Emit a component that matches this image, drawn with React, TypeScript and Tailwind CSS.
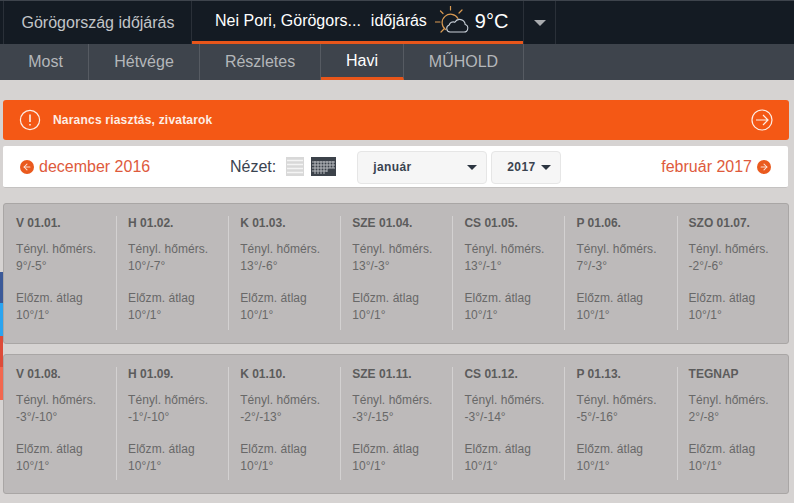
import { ArrowLeft, ArrowRight } from "lucide-react";

const row1 = [
  { day: "V 01.01.", temp: "9°/-5°" },
  { day: "H 01.02.", temp: "10°/-7°" },
  { day: "K 01.03.", temp: "13°/-6°" },
  { day: "SZE 01.04.", temp: "13°/-3°" },
  { day: "CS 01.05.", temp: "13°/-1°" },
  { day: "P 01.06.", temp: "7°/-3°" },
  { day: "SZO 01.07.", temp: "-2°/-6°" },
];

const row2 = [
  { day: "V 01.08.", temp: "-3°/-10°" },
  { day: "H 01.09.", temp: "-1°/-10°" },
  { day: "K 01.10.", temp: "-2°/-13°" },
  { day: "SZE 01.11.", temp: "-3°/-15°" },
  { day: "CS 01.12.", temp: "-3°/-14°" },
  { day: "P 01.13.", temp: "-5°/-16°" },
  { day: "TEGNAP", temp: "2°/-8°" },
];

const tabs = [
  { label: "Most", w: "w-[86px]" },
  { label: "Hétvége", w: "w-[111px]" },
  { label: "Részletes", w: "w-[121px]" },
  { label: "Havi", w: "w-[83px]", active: true },
  { label: "MŰHOLD", w: "w-[120px]" },
];

function WeatherIcon() {
  return (
    <svg width="34" height="30" viewBox="0 0 34 30" fill="none" className="shrink-0">
      <g stroke="#d99a52" strokeWidth="1.2" strokeLinecap="round">
        <path d="M15.5 0v4M5.5 5l2.5 2.5M27 4l-3 3M0.5 16h4.5M6 26l3-3" />
        <path d="M10.5 23.5a8.5 8.5 0 1 1 12.5-11" />
      </g>
      <path
        d="M15 26h14a3.8 3.8 0 0 0 1.2-7.4 5.6 5.6 0 0 0-10.4-2.4 4.2 4.2 0 0 0-5.6 2.8A3.6 3.6 0 0 0 15 26z"
        stroke="#c9d0d8"
        strokeWidth="1.1"
      />
    </svg>
  );
}

function DayCard({ items, height }: { items: typeof row1; height: string }) {
  return (
    <div className={`flex ${height} rounded-[3px] border border-[#a9a6a5] bg-[#bdbaba] pl-px`}>
      {items.map((item, i) => (
        <div key={item.day} className="w-[112.1px] shrink-0 pt-[12px] pb-[13px]">
          <div className={`h-full pl-[11px] ${i < 6 ? "border-r border-[#d3d1d1]" : ""}`}>
            <div className="text-xs leading-[14px] font-bold text-[#5c5c5c]">{item.day}</div>
            <div className="mt-[11px] text-xs leading-[17px] tracking-[0.05px] text-[#686868]">Tényl. hőmérs.</div>
            <div className="text-xs leading-[16px] tracking-[0.05px] text-[#686868]">{item.temp}</div>
            <div className="mt-[16px] text-xs leading-[17px] tracking-[0.05px] text-[#686868]">Előzm. átlag</div>
            <div className="text-xs leading-[16px] tracking-[0.05px] text-[#686868]">10°/1°</div>
          </div>
        </div>
      ))}
    </div>
  );
}

export default function App() {
  return (
    <div className="relative h-[503px] w-[794px] overflow-hidden bg-[#d6d3d2] font-['Liberation_Sans',Arial,sans-serif]">
      {/* Social strip */}
      <div className="absolute left-0 top-[272px] w-[3px]">
        <div className="h-[31px] bg-[#3b5998]" />
        <div className="h-[33px] bg-[#2aa4f0]" />
        <div className="h-[31px] bg-[#dd4b39]" />
        <div className="h-[33px] bg-[#f2674f]" />
      </div>

      {/* Top nav */}
      <div className="h-[44px] border-t border-[#3e444c] bg-[#141b23]">
        <div className="flex h-full pl-[3px]">
          <div className="flex w-[189px] items-center justify-center border-x border-[#2a3038] pl-px text-base text-[#c2c5c8]">
            Görögország időjárás
          </div>
          <div className="flex h-[43px] w-[331px] items-center border-b-[3px] border-[#e8561a] pl-[23px] text-base text-white">
            <span>Nei Pori, Görögors...</span>
            <span className="ml-[10px]">időjárás</span>
            <span className="ml-[8px]">
              <WeatherIcon />
            </span>
            <span className="ml-[6px] text-xl">9°C</span>
          </div>
          <div className="flex w-[33px] items-center justify-center border-x border-[#2a3038]">
            <div className="h-0 w-0 border-x-[6px] border-t-[6px] border-x-transparent border-t-[#a9acaf]" />
          </div>
        </div>
      </div>

      {/* Sub nav */}
      <div className="flex h-[36px] bg-[#3e444c] pl-[3px]">
        {tabs.map((tab) => (
          <div
            key={tab.label}
            className={`flex ${tab.w} items-center justify-center border-r border-[#565b62] text-base ${
              tab.active ? "border-b-[3px] border-b-[#e8561a] text-white" : "text-[#b4b7ba]"
            }`}
          >
            {tab.label}
          </div>
        ))}
      </div>

      {/* Alert */}
      <div className="ml-[3px] mt-[20px] flex h-[40px] w-[786px] items-center justify-between rounded-[3px] bg-[#f45815] pl-[16px] pr-[16px]">
        <div className="flex items-center">
          <svg width="22" height="22" viewBox="0 0 22 22" fill="none" stroke="#fdeee6" strokeWidth="1.2">
            <circle cx="11" cy="11" r="9.6" />
            <path d="M11 5.5v7.5M11 15v1.6" strokeWidth="1.6" />
          </svg>
          <span className="ml-[12px] text-xs font-bold tracking-[0.2px] text-[#fdeee6]">Narancs riasztás, zivatarok</span>
        </div>
        <svg width="22" height="22" viewBox="0 0 22 22" fill="none" stroke="#fdeee6" strokeWidth="1.2">
          <circle cx="11" cy="11" r="10" />
          <path d="M5 11h12M12 6l5 5-5 5" />
        </svg>
      </div>

      {/* Month selector */}
      <div className="ml-[3px] mt-[6px] flex h-[42px] w-[785px] items-center rounded-[2px] border-b border-[#c4c2c1] bg-white pl-[17px]">
        <div className="flex w-[210px] items-center">
          <span className="flex h-[14px] w-[14px] items-center justify-center rounded-full bg-[#ea5a1e]">
            <ArrowLeft size={10} strokeWidth={2.5} className="text-white/80" />
          </span>
          <span className="ml-[5px] text-base text-[#de5a3c]">december 2016</span>
        </div>
        <span className="text-base text-[#3a4350]">Nézet:</span>
        <svg width="18" height="19" viewBox="0 0 18 19" className="ml-[10px] shrink-0">
          <rect width="18" height="19" fill="#d8d8d8" />
          <path d="M1 3.5h16M1 7.5h16M1 11.5h16M1 15.5h16" stroke="#f4f4f4" strokeWidth="1.5" />
        </svg>
        <svg width="25" height="19" viewBox="0 0 25 19" className="ml-[7px] shrink-0">
          <rect width="25" height="19" fill="#3c424a" />
          <path d="M1 5h23M1 8h23M1 11h23M1 14h15M4 4v13M7 4v13M10 4v13M13 4v13M16 4v11M19 4v7M22 4v7" stroke="#b8bbbf" strokeWidth="1" />
        </svg>
        <div className="ml-[21px] mt-px flex h-[33px] w-[130px] items-center justify-between rounded-[4px] border border-[#e6e6e6] bg-[#f6f6f6] pl-[15px] pr-[9px] text-xs font-bold tracking-[0.4px] text-[#3a4350]">
          <span>január</span>
          <div className="h-0 w-0 border-x-[5px] border-t-[5px] border-x-transparent border-t-[#2c3541]" />
        </div>
        <div className="ml-[4px] mt-px flex h-[33px] w-[70px] items-center justify-between rounded-[4px] border border-[#e6e6e6] bg-[#f6f6f6] pl-[15px] pr-[9px] text-xs font-bold tracking-[0.4px] text-[#3a4350]">
          <span>2017</span>
          <div className="h-0 w-0 border-x-[5px] border-t-[5px] border-x-transparent border-t-[#2c3541]" />
        </div>
        <div className="ml-auto flex items-center pr-[17px]">
          <span className="text-base text-[#de5a3c]">február 2017</span>
          <span className="ml-[5px] flex h-[14px] w-[14px] items-center justify-center rounded-full bg-[#ea5a1e]">
            <ArrowRight size={10} strokeWidth={2.5} className="text-white/80" />
          </span>
        </div>
      </div>

      {/* Day grids */}
      <div className="ml-[3px] mt-[15px] flex w-[786px] flex-col gap-[10px]">
        <DayCard items={row1} height="h-[141px]" />
        <DayCard items={row2} height="h-[140px]" />
      </div>
    </div>
  );
}
